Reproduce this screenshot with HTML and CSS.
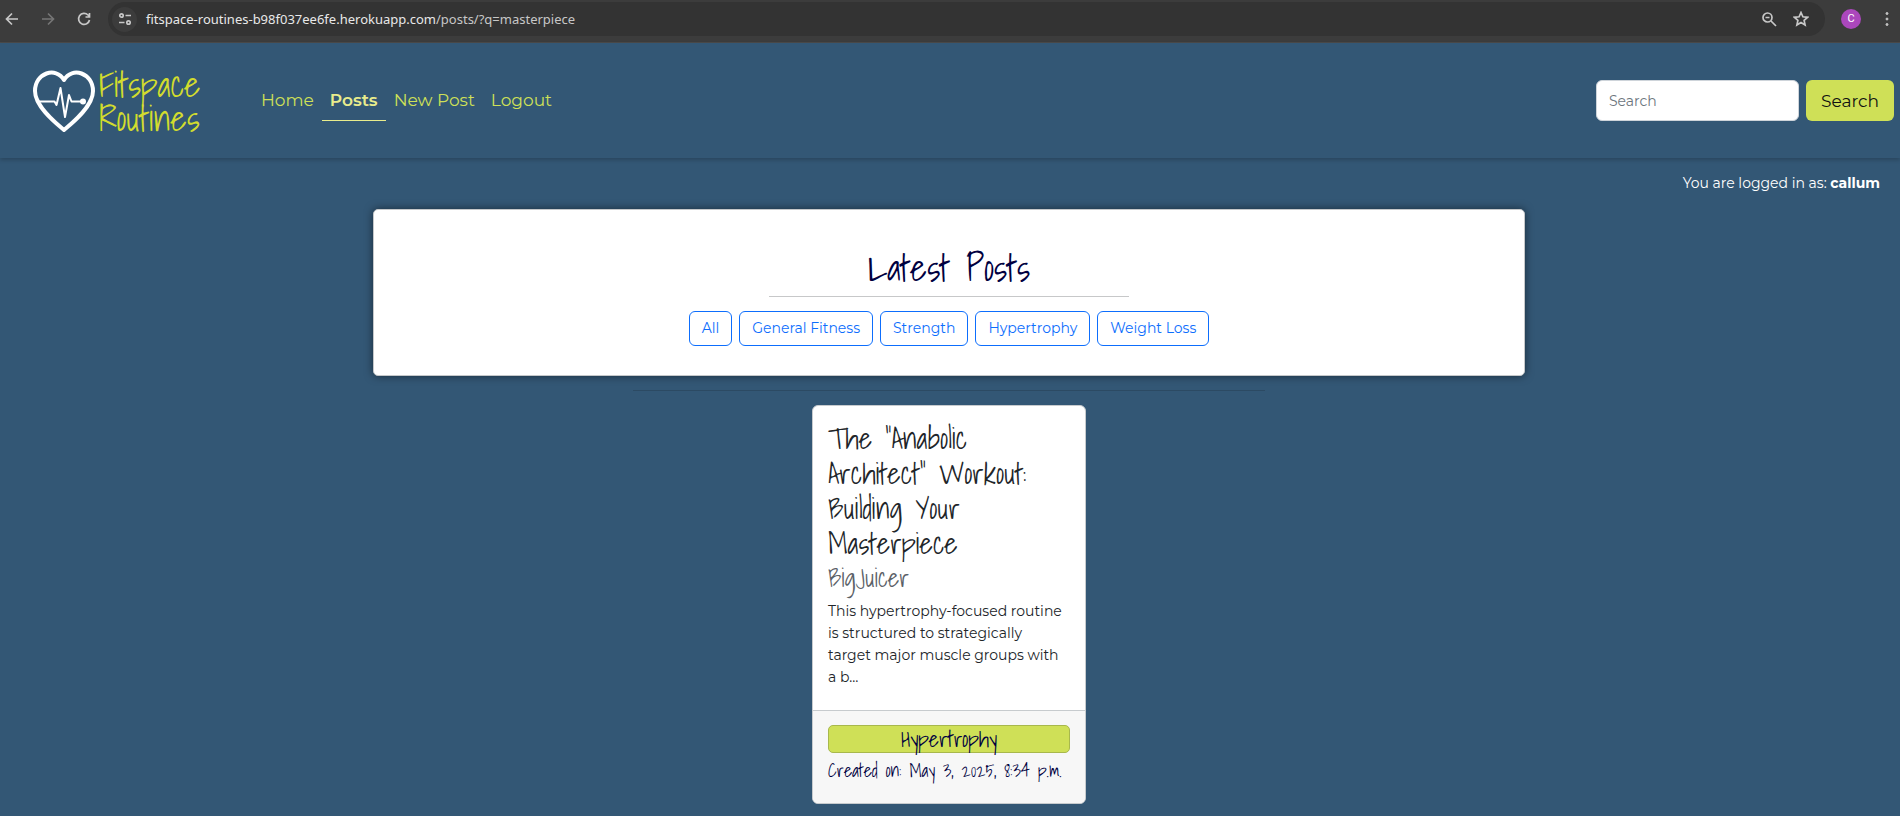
FILE: index.html
```html
<!DOCTYPE html>
<html lang="en">
<head>
<meta charset="utf-8">
<title>Fitspace Routines</title>
<link rel="stylesheet" href="styles.css">
</head>
<body>
<div class="browser">
  <button class="tool" aria-label="Back"><svg width="16" height="16" viewBox="0 0 16 16"><path d="M14 8H3M8 2.500 2.500 8 8 13.500"/></svg></button>
  <button class="tool tool-dim" aria-label="Forward"><svg width="16" height="16" viewBox="0 0 16 16"><path d="M2 8h11M8 2.500 13.500 8 8 13.500"/></svg></button>
  <button class="tool" aria-label="Reload"><svg width="16" height="16" viewBox="0 0 16 16"><path d="M13.500 9A5.500 5.500 0 1 1 12 4l1.500 1.500M13.500 2v4h-4"/></svg></button>
  <div class="omnibox">
    <button class="site-info" aria-label="Site information"><svg width="14" height="14" viewBox="0 0 14 14"><circle cx="3.500" cy="3.500" r="1.700"/><path d="M7.500 3.500H13M1 10.500h5.500"/><circle cx="10.500" cy="10.500" r="1.700"/></svg></button>
    <span class="address">fitspace-routines-b98f037ee6fe.herokuapp.com<span class="path">/posts/?q=masterpiece</span></span>
    <button class="tool" aria-label="Zoom"><svg width="16" height="16" viewBox="0 0 16 16"><circle cx="6.500" cy="6.500" r="4.500"/><path d="M10 10l5 5M4.500 6.500h4"/></svg></button>
    <button class="tool" aria-label="Bookmark"><svg width="16" height="16" viewBox="0 0 16 16"><path d="M8 1.500l1.900 4.300 4.700.5-3.500 3.100 1 4.600L8 11.600 3.900 14l1-4.600L1.400 6.300l4.700-.5z"/></svg></button>
  </div>
  <button class="avatar" aria-label="Profile">C</button>
  <button class="tool dots" aria-label="Menu"><svg width="16" height="16" viewBox="0 0 16 16"><circle cx="8" cy="2.500" r="1"/><circle cx="8" cy="8" r="1"/><circle cx="8" cy="13.500" r="1"/></svg></button>
</div>
<header class="navbar">
  <a class="brand" href="#">
    <svg width="64" height="64" viewBox="0 0 64 64"><path class="heart" d="M32 61C25 55 3 38 3 22 3 4 24-3 32 11 40-3 61 4 61 22c0 16-22 33-29 39z"/><path class="pulse" d="M5 32.500h17.500l2 3.500L28.500 19l4.500 29 4-22 2.500 6.500H50"/><circle cx="51" cy="32.500" r="3"/></svg>
    <span class="brand-name">Fitspace<br>Routines</span>
  </a>
  <nav class="links">
    <a href="#">Home</a>
    <a href="#" class="active" aria-current="page">Posts</a>
    <a href="#">New Post</a>
    <a href="#">Logout</a>
  </nav>
  <form class="search">
    <input type="search" placeholder="Search" aria-label="Search">
    <button type="button">Search</button>
  </form>
</header>
<p class="status">You are logged in as: <strong>callum</strong></p>
<main>
  <section class="masthead">
    <h1>Latest Posts</h1>
    <hr>
    <div class="filters">
      <a href="#">All</a>
      <a href="#">General Fitness</a>
      <a href="#">Strength</a>
      <a href="#">Hypertrophy</a>
      <a href="#">Weight Loss</a>
    </div>
  </section>
  <hr class="divider">
  <article class="post">
    <div class="post-body">
      <h2>The "Anabolic Architect" Workout: Building Your Masterpiece</h2>
      <h3>BigJuicer</h3>
      <p>This hypertrophy-focused routine is structured to strategically target major muscle groups with a b…</p>
    </div>
    <footer class="post-footer">
      <div class="badge">Hypertrophy</div>
      <div class="created">Created on: May 3, 2025, 8:34 p.m.</div>
    </footer>
  </article>
</main>
</body>
</html>
```
FILE: styles.css
```css
:root {
  --hand: "Shadows Into Light", "Liberation Sans Narrow", sans-serif;
  --sans: "Montserrat", "Inter", sans-serif;
  --blue: #335775;
  --lime: #cfe057;
}
* { box-sizing: border-box; }
body {
  margin: 0;
  background: var(--blue);
  font-family: var(--sans);
  font-size: 14px;
  line-height: 22px;
  color: #212529;
}
button, input { font: inherit; }
a { text-decoration: none; }

.browser {
  display: flex;
  align-items: center;
  height: 43px;
  padding: 0 4px 4px 0;
  background: #3c3c3c;
  border-bottom: 1px solid #4a4a4a;
}
.tool {
  display: grid;
  place-items: center;
  width: 24px;
  height: 24px;
  margin-right: 12px;
  padding: 0;
  border: 0;
  background: none;
}
.browser svg { fill: none; stroke: #c7c7c7; stroke-width: 1.7; }
.browser .tool-dim svg { stroke: #757575; }
.omnibox {
  display: flex;
  flex: 1;
  align-items: center;
  height: 34px;
  padding: 0 0 0 4px;
  border-radius: 17px;
  background: #333;
}
.omnibox .tool { margin-right: 8px; }
.omnibox .tool:last-child { margin-right: 12px; }
.site-info {
  display: grid;
  place-items: center;
  width: 25px;
  height: 25px;
  padding: 0;
  border: 0;
  border-radius: 50%;
  background: #3c3c3c;
}
.address {
  flex: 1;
  margin-left: 9px;
  font: 13px/20px "Segoe UI", "Noto Sans", sans-serif;
  color: #e8e8e8;
}
.path { color: #c7c7c7; }
.avatar {
  width: 20px;
  height: 20px;
  margin: 0 14px 0 16px;
  padding: 0;
  border: 0;
  border-radius: 50%;
  background: #ab47bc;
  color: #fff;
  font: 11px/20px Roboto, sans-serif;
}
.browser .dots { margin: 0 -3px 0 0; }
.browser .dots svg { fill: #c7c7c7; stroke-width: 1; }

.navbar {
  display: flex;
  align-items: center;
  min-height: 115px;
  padding: 0 6px 0 32px;
  box-shadow: 0 2px 4px rgba(0, 0, 0, .2);
}
.brand { display: flex; align-items: center; gap: 3px; width: 221px; }
.heart, .pulse { fill: none; stroke: #fff; stroke-width: 4; stroke-linejoin: round; }
.pulse { stroke-width: 2; }
.brand circle { fill: #fff; }
.brand-name {
  font: 35px/34px var(--hand);
  color: #d2dc2e;
}
.links { display: flex; flex: 1; }
.links a {
  padding: 10px 8px;
  border-bottom: 1px solid transparent;
  color: #cfe057;
  font-size: 17px;
  line-height: 20px;
}
.links .active { border-color: #e9ec8c; color: #e9ec8c; font-weight: 600; }
.search { display: flex; gap: 7px; }
.search input {
  width: 203px;
  height: 41px;
  padding: 0 12px;
  border: 1px solid #ced4da;
  border-radius: 6px;
  background: #fff;
}
.search input::placeholder { color: #6c757d; opacity: 1; }
.search button {
  height: 41px;
  padding: 0 15px;
  border: 0;
  border-radius: 6px;
  background: var(--lime);
  color: #111;
  font-size: 17px;
}
.status { margin: 14px 20px 15px; text-align: right; color: #fff; }

main { padding-right: 2px; }
.masthead {
  width: min(1152px, 100%);
  margin: 0 auto;
  padding: 36px 16px 29px;
  border: 1px solid #c5c8ca;
  border-radius: 5px;
  background: #fff;
  box-shadow: 0 0 8px rgba(0, 0, 0, .5);
  text-align: center;
}
.masthead h1 { margin: 0; font: 36px/44px var(--hand); color: #000040; }
.masthead hr { width: 360px; margin: 6px auto 14px; border: 0; border-top: 1px solid #c7c8c9; }
.filters { display: flex; justify-content: center; gap: 7px; }
.filters a {
  padding: 6px 12px;
  border: 1px solid #0d6efd;
  border-radius: 6px;
  color: #0d6efd;
  line-height: 21px;
}
.divider { width: 33.333%; margin: 14px auto; border: 0; border-top: 1px solid #2c4a63; }

.post {
  width: 274px;
  margin: 0 auto 14px;
  border: 1px solid #c7cbce;
  border-radius: 6px;
  background: #fff;
  overflow: hidden;
}
.post-body { padding: 15px 20px 22px 15px; }
.post h2 { margin: 0; font: 29px/35px var(--hand); color: #212529; }
.post h3 { margin: 1px 0 6px; font: 25px/32px var(--hand); color: #5b6167; }
.post p { margin: 0; }
.post-footer { padding: 14px 15px 18px; border-top: 1px solid #c7cbce; background: #f7f7f7; }
.badge {
  border: 1px solid #a8b84c;
  border-radius: 5px;
  background: var(--lime);
  font: 22px/26px var(--hand);
  color: #000040;
  text-align: center;
}
.created { margin-top: 4px; font: 18px/28px var(--hand); color: #000040; white-space: nowrap; }
```
